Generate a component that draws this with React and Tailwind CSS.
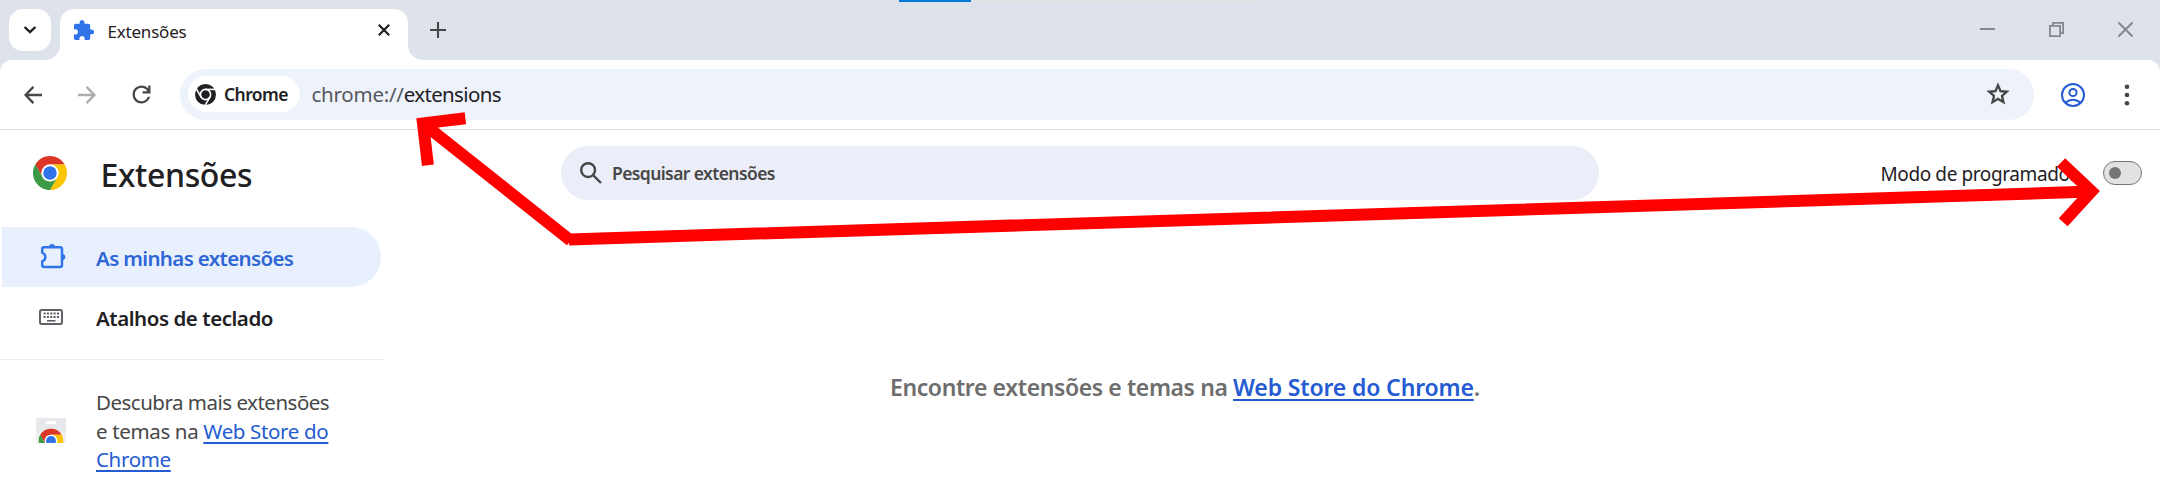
const SECTOR = "M3.22 12A24 24 0 0 1 44.78 12H24A12 12 0 0 0 13.61 30Z";

function ChromeLogo({ className }) {
  return (
    <svg viewBox="0 0 48 48" className={className}>
      <path d={SECTOR} fill="#dc3626" />
      <path d={SECTOR} fill="#fcc504" transform="rotate(120 24 24)" />
      <path d={SECTOR} fill="#3c9a47" transform="rotate(240 24 24)" />
      <circle cx="24" cy="24" r="12" fill="#fff" />
      <circle cx="24" cy="24" r="9.5" fill="#3174ea" />
    </svg>
  );
}

function ChromeMono() {
  return (
    <svg viewBox="0 0 21 21" className="size-[21px]">
      <circle cx="10.5" cy="10.5" r="10.5" fill="#1f2023" />
      <g stroke="#fff" strokeWidth="1.6" fill="none">
        <circle cx="10.5" cy="10.5" r="5.1" />
        <path d="M10.5 5.4H21" />
        <path d="M10.5 5.4H21" transform="rotate(120 10.5 10.5)" />
        <path d="M10.5 5.4H21" transform="rotate(240 10.5 10.5)" />
      </g>
    </svg>
  );
}

function TabStrip() {
  return (
    <div className="flex h-[60px] items-start pt-[9px] pl-[9px]">
      <div className="flex size-[42px] items-center justify-center rounded-[14px] bg-white">
        <svg viewBox="0 0 14 10" className="h-[10px] w-[14px]" fill="none" stroke="#1f2023" strokeWidth="2.4">
          <path d="M1.6 2 7 7.2 12.4 2" />
        </svg>
      </div>
      <div className="relative ml-[9px] flex h-[51px] w-[348px] items-start rounded-t-[14px] bg-white pt-[10px] pl-3">
        <svg viewBox="0 0 15 15" className="absolute bottom-0 -left-[15px] size-[15px]"><path d="M15 0V15H0A15 15 0 0 0 15 0Z" fill="#fff" /></svg>
        <svg viewBox="0 0 15 15" className="absolute -right-[15px] bottom-0 size-[15px]"><path d="M0 0V15H15A15 15 0 0 1 0 0Z" fill="#fff" /></svg>
        <svg viewBox="0 0 24 24" className="size-[23px]" fill="#3174ea">
          <path d="M20.5 11H19V7c0-1.1-.9-2-2-2h-4V3.5C13 2.12 11.88 1 10.5 1S8 2.12 8 3.5V5H4c-1.1 0-1.99.9-1.99 2v3.8H3.5c1.49 0 2.7 1.21 2.7 2.7s-1.21 2.7-2.7 2.7H2V20c0 1.1.9 2 2 2h3.8v-1.5c0-1.49 1.21-2.7 2.7-2.7 1.49 0 2.7 1.21 2.7 2.7V22H17c1.1 0 2-.9 2-2v-4h1.5c1.38 0 2.5-1.12 2.5-2.5S21.88 11 20.5 11z" />
        </svg>
        <span className="mt-px ml-[12.5px] text-[17px] leading-6 tracking-[-0.2px] text-[#1f2023]">Extensões</span>
        <svg viewBox="0 0 12 12" className="mt-[5px] mr-[18px] ml-auto size-3" fill="none" stroke="#1f2023" strokeWidth="2.2">
          <path d="M.8.8 11.2 11.2M11.2.8.8 11.2" />
        </svg>
      </div>
      <svg viewBox="0 0 16 16" className="mt-[13px] ml-[22px] size-4" stroke="#474747" strokeWidth="2.1"><path d="M8 0V16M0 8H16" /></svg>
      <div className="-mt-[9px] ml-[453px] flex h-[2px] w-[362px] bg-[#e4e4e4]">
        <div className="w-[72px] bg-[#0078d7]" />
      </div>
      <div className="mt-[13px] mr-[27px] ml-auto flex gap-[54px] text-[#85878b]">
        <svg viewBox="0 0 15 15" className="size-[15px]" fill="currentColor"><path d="M0 6h15v2H0z" /></svg>
        <svg viewBox="0 0 15 15" className="size-[15px]" fill="none" stroke="currentColor" strokeWidth="1.8"><path d="M.9 3.9H11.1V14.1H.9ZM3.9 3.9V.9H14.1V11.1H11.1" /></svg>
        <svg viewBox="0 0 15 15" className="size-[15px]" fill="none" stroke="currentColor" strokeWidth="2"><path d="M.4.4 14.6 14.6M14.6.4.4 14.6" /></svg>
      </div>
    </div>
  );
}

function Toolbar() {
  return (
    <div className="flex h-[70px] items-start rounded-t-[12px] border-b border-[#dddfe0] bg-white pt-[9px]">
      <div className="flex h-[51px] w-[180px] items-center pl-6">
        <svg viewBox="0 0 18 18" className="size-[18px]" fill="none" stroke="#474747" strokeWidth="2.3"><path d="M18 9H2M9.4.9 1.6 9 9.4 17.1" /></svg>
        <svg viewBox="0 0 18 18" className="ml-9 size-[18px]" fill="none" stroke="#acacac" strokeWidth="2.3"><path d="M0 9H16M8.6.9 16.4 9 8.6 17.1" /></svg>
        <svg viewBox="0 0 24 24" className="ml-[31.5px] size-[27px]" fill="#474747">
          <path d="M12 20q-3.35 0-5.675-2.325T4 12t2.325-5.675T12 4q1.725 0 3.3.713T18 6.75V4h2v7h-7V9h4.2q-.8-1.4-2.187-2.2T12 6Q9.5 6 7.75 7.75T6 12t1.75 4.25T12 18q1.925 0 3.475-1.1T17.65 14h2.1q-.7 2.65-2.85 4.325T12 20" />
        </svg>
      </div>
      <div className="flex h-[51px] w-[1854px] items-center rounded-full bg-[#edf2fb] pl-2">
        <div className="mb-px flex h-9 w-[112px] items-center gap-2 rounded-full bg-white pl-[7px]">
          <ChromeMono />
          <span className="text-[17.5px] leading-6 font-semibold tracking-[-0.6px] text-[#1f2023]">Chrome</span>
        </div>
        <div className="mb-px ml-[11.5px] text-[20.5px] leading-7 whitespace-nowrap">
          <span className="tracking-[-0.25px] text-[#55585c]">chrome://</span>
          <span className="tracking-[-0.65px] text-[#1f2023]">extensions</span>
        </div>
        <svg viewBox="0 0 24 24" className="mr-[22px] mb-0.5 ml-auto size-7" fill="#474747">
          <path d="m8.85 16.825 3.15-1.9 3.15 1.925-.825-3.6 2.775-2.4-3.65-.325-1.45-3.4-1.45 3.375-3.65.325 2.775 2.425zM5.825 21l1.625-7.025L2 9.25l7.2-.625L12 2l2.8 6.625 7.2.625-5.45 4.725L18.175 21 12 17.275z" />
        </svg>
      </div>
      <svg viewBox="0 0 24 24" className="mt-[14px] ml-[27px] size-6" fill="none" stroke="#245bd2" strokeWidth="2">
        <circle cx="12" cy="12" r="11" /><circle cx="12" cy="9.5" r="3.6" /><path d="M4.6 19.6Q8 16.7 12 16.7T19.4 19.6" />
      </svg>
      <svg viewBox="0 0 6 22" className="mt-[15px] ml-[39px] h-[22px] w-[6px]" fill="#474747">
        <circle cx="3" cy="2.8" r="2.3" /><circle cx="3" cy="11" r="2.3" /><circle cx="3" cy="19.2" r="2.3" />
      </svg>
    </div>
  );
}

function Sidebar() {
  return (
    <aside className="w-[384px] shrink-0">
      <div className="flex h-[97px] items-start pt-[26px] pl-[33px]">
        <ChromeLogo className="size-[34px]" />
        <h1 className="-mt-px ml-[33.5px] text-[32px] leading-[40px] font-medium tracking-[-0.35px] text-[#1f2023]">Extensões</h1>
      </div>
      <div className="ml-0.5 flex h-[60px] w-[379px] items-center rounded-r-full bg-[#e8f0fe] pl-[38px] text-[#2f66d6]">
        <svg viewBox="0 0 26 26" className="mb-[3px] size-[26px]" fill="none" stroke="#3174ea" strokeWidth="2.5" strokeLinejoin="round">
          <path d="M4 4.3H20Q22 4.3 22 6.3V22Q22 24 20 24H4.2Q2.2 24 2.2 22V18.4Q5.4 17 5.4 14T2.2 9.6V6.3Q2.2 4.3 4 4.3Z" />
          <path d="M9 4A3 3 0 0 1 15 4ZM22.3 11V17A3 3 0 0 0 22.3 11Z" fill="#3174ea" stroke="none" />
        </svg>
        <span className="mt-0.5 ml-[30px] text-[20.5px] leading-7 font-semibold tracking-[-0.65px]">As minhas extensões</span>
      </div>
      <div className="flex h-[60px] items-center pl-[39px] text-[#1f2023]">
        <svg viewBox="0 0 24 16" className="h-4 w-6" fill="none" stroke="#5f6368">
          <rect x="1" y="1" width="22" height="14" rx="1.8" strokeWidth="2" />
          <path d="M4.5 4.6H20M4.5 8H20" strokeWidth="2" strokeDasharray="2.1 1.25" />
          <path d="M8 11.8H16.5" strokeWidth="1.6" />
        </svg>
        <span className="mt-0.5 ml-[33px] text-[20.5px] leading-7 font-semibold tracking-[-0.45px]">Atalhos de teclado</span>
      </div>
      <div className="mt-3 h-px bg-[#ececec]" />
      <div className="flex items-center pt-[28px] pl-9">
        <svg viewBox="0 0 30 25" className="mb-px h-[25px] w-[30px]">
          <rect width="30" height="25" rx="1" fill="#eeeff1" />
          <rect width="30" height="13" rx="1" fill="#e6e8eb" />
          <rect x="10" y="3" width="10" height="3" rx="1.5" fill="#fff" />
          <svg x="2.5" y="10.5" width="25" height="14.5" viewBox="0 0 48 27.84">
            <path d={SECTOR} fill="#dc3626" />
            <path d={SECTOR} fill="#fcc504" transform="rotate(120 24 24)" />
            <path d={SECTOR} fill="#3c9a47" transform="rotate(240 24 24)" />
            <circle cx="24" cy="24" r="12" fill="#fff" />
            <circle cx="24" cy="24" r="9.5" fill="#3174ea" />
          </svg>
        </svg>
        <div className="ml-[30px] text-[20.5px] leading-[28.5px] whitespace-nowrap text-[#474747]">
          <div className="tracking-[-0.5px]">Descubra mais extensões</div>
          <div className="tracking-[-0.35px]">
            e temas na{" "}
            <a className="text-[#245bd2] underline decoration-2 underline-offset-[3px]">Web Store do<br />Chrome</a>
          </div>
        </div>
      </div>
    </aside>
  );
}

function Main() {
  return (
    <main className="flex flex-1 flex-col">
      <div className="flex items-center pt-4 pl-[177px]">
        <div className="flex h-[54px] w-[1038px] items-center rounded-full bg-[#ebeef8] pl-[19px]">
          <svg viewBox="0 0 22 22" className="size-[22px]" fill="none" stroke="#474747" strokeWidth="2.4">
            <circle cx="8.1" cy="8.1" r="6.9" /><path d="M12.9 12.9 21 21" />
          </svg>
          <span className="ml-[10px] text-[17.5px] leading-6 font-semibold tracking-[-0.6px] text-[#474747]">Pesquisar extensões</span>
        </div>
        <span className="mt-0.5 ml-auto text-[19px] leading-7 tracking-[-0.4px] text-[#1f2023]">Modo de programador</span>
        <div className="mr-[18px] ml-[26px] flex h-6 w-[39px] items-center rounded-full border border-[#747775] bg-[#e1e3e1] pl-[5px]">
          <div className="size-3 rounded-full bg-[#747775]" />
        </div>
      </div>
      <p className="mt-[171px] ml-[506px] text-[23px] leading-8 font-semibold whitespace-nowrap text-[#6e6e6e]">
        <span className="tracking-[-0.4px]">Encontre extensões e temas na </span>
        <a className="tracking-[-0.15px] text-[#245bd2] underline decoration-2 underline-offset-[3px]">Web Store do Chrome</a>.
      </p>
    </main>
  );
}

export default function App() {
  return (
    <div className="relative h-[496px] w-[2160px] overflow-hidden bg-white font-['Noto_Sans','Open_Sans',sans-serif]">
      <header className="bg-[#dee2ea]">
        <TabStrip />
        <Toolbar />
      </header>
      <div className="flex">
        <Sidebar />
        <Main />
      </div>
      <svg viewBox="0 0 2160 496" className="pointer-events-none absolute inset-0 h-[496px] w-[2160px]" fill="none" stroke="#ff0000" strokeWidth="12">
        <path d="M465.4 118.3 423 123.4 427.9 165.3M423 123.4 570.7 240.6M569 239.5 2091.5 191.6M2061 162.5 2091.5 191.4 2063.2 222.2" />
      </svg>
    </div>
  );
}
